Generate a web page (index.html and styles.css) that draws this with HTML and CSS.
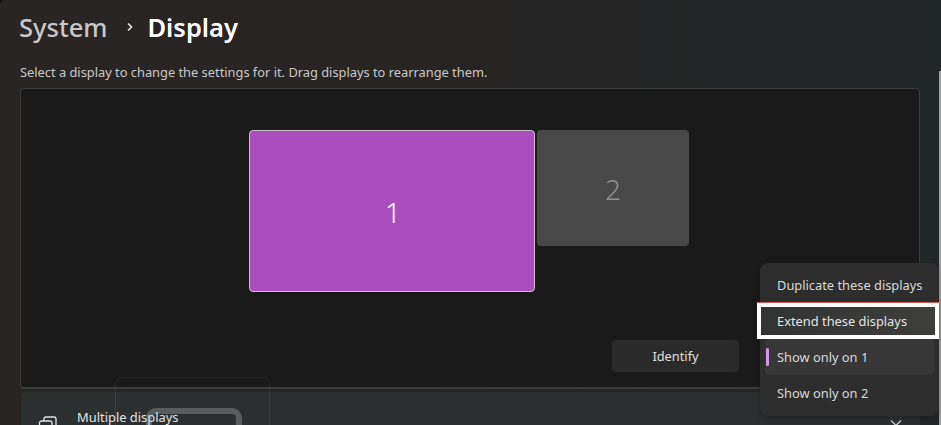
FILE: index.html
```html
<!DOCTYPE html>
<html lang="en">
<head>
<meta charset="utf-8">
<title>System Display</title>
<link rel="stylesheet" href="styles.css">
</head>
<body>
<div class="window">
  <header class="crumbs">
    <span class="crumb-parent">System</span>
    <svg class="crumb-sep" width="10" height="12" viewBox="0 0 10 12"><path d="M3 2.500 6.500 6 3 9.500" fill="none" stroke="#e0e0e0" stroke-width="1.700"/></svg>
    <span class="crumb-current">Display</span>
  </header>
  <p class="hint">Select a display to change the settings for it. Drag displays to rearrange them.</p>
  <section class="arranger">
    <div class="monitor monitor-one">1</div>
    <div class="monitor monitor-two">2</div>
    <div class="identify-row"><button class="identify">Identify</button></div>
  </section>
  <section class="row">
    <svg class="row-icon" width="20" height="16" viewBox="0 0 20 16"><path d="M6 4.500V3a2 2 0 0 1 2-2h8a2 2 0 0 1 2 2v6a2 2 0 0 1-2 2h-1M3.500 5h8.500a2 2 0 0 1 2 2v6a2 2 0 0 1-2 2H3.500a2 2 0 0 1-2-2V7a2 2 0 0 1 2-2z" fill="none" stroke="#e4e4e4" stroke-width="1.300"/></svg>
    <span class="row-title">Multiple displays</span>
    <svg class="row-chevron" width="14" height="8" viewBox="0 0 14 8"><path d="M2 1.500 7 6.500 12 1.500" fill="none" stroke="#cfcfcf" stroke-width="1.300"/></svg>
  </section>
  <div class="ghost-outer"></div>
  <div class="ghost-inner"></div>
  <div class="scrollbar"></div>
  <div class="menu">
    <div class="menu-item">Duplicate these displays</div>
    <div class="menu-item menu-highlight">Extend these displays</div>
    <div class="menu-item menu-selected">Show only on 1</div>
    <div class="menu-item">Show only on 2</div>
  </div>
</div>
</body>
</html>
```
FILE: styles.css
```css
* { box-sizing: border-box; }
html, body { margin: 0; padding: 0; background: #111; }
.window {
  position: relative;
  width: 941px;
  height: 425px;
  overflow: hidden;
  padding: 1px 21px 0 20px;
  border-top-left-radius: 5px;
  background: linear-gradient(90deg, #292523 0%, #272423 45%, #232526 75%, #212627 100%);
  font-family: "Noto Sans", "Open Sans", sans-serif;
  color: #e6e6e6;
}
.crumbs {
  display: flex;
  align-items: center;
  height: 51px;
  margin-left: -1px;
  font-size: 25.500px;
  font-weight: 500;
}
.crumb-parent { color: #c8c8c8; }
.crumb-sep { margin: 0 12px 0 18px; }
.crumb-current { color: #fff; font-weight: 600; }
.hint {
  margin: 12px 0 0;
  height: 24px;
  font-size: 12.830px;
  line-height: 17px;
  color: #c9c9c9;
}
.arranger {
  position: relative;
  height: 301px;
  border: 1px solid #3d3d3d;
  border-bottom-width: 2px;
  border-radius: 4px;
  background: #1a1a1a;
}
.monitor {
  position: absolute;
  display: flex;
  align-items: center;
  justify-content: center;
  padding-top: 2px;
  border-radius: 4px;
  font-size: 28px;
  font-weight: 300;
}
.monitor-one {
  left: 228px;
  top: 41px;
  width: 286px;
  height: 162px;
  padding-left: 2px;
  background: #aa4dbd;
  border: 1px solid #cdbcd1;
  color: #fff;
}
.monitor-two {
  left: 516px;
  top: 41px;
  width: 152px;
  height: 116px;
  background: #484848;
  color: #8f8f8f;
}
.identify-row {
  display: flex;
  justify-content: flex-end;
  padding: 251px 180px 0 0;
}
.identify {
  width: 127px;
  height: 32px;
  border: 0;
  border-radius: 4px;
  background: #2a2a2a;
  font: 400 12.800px "Noto Sans", sans-serif;
  color: #e0e0e0;
}
.row {
  position: relative;
  display: flex;
  align-items: flex-start;
  height: 60px;
  margin: 3px 0 0 1px;
  padding: 18px 17px 0 17px;
  border-radius: 4px 4px 0 0;
  background: #2b2f30;
}
.row-icon { margin-top: 6px; flex: none; }
.row-title {
  position: relative;
  z-index: 1;
  margin: -1px 0 0 19px;
  font-size: 12.900px;
  line-height: 17px;
  color: #e4e4e4;
}
.row-chevron { margin: 9px 0 0 auto; flex: none; }
.ghost-outer {
  position: absolute;
  left: 115px;
  top: 377px;
  width: 155px;
  height: 70px;
  border: 1px solid rgba(255, 255, 255, 0.06);
  border-radius: 8px;
}
.ghost-inner {
  position: absolute;
  left: 146px;
  top: 408px;
  width: 96px;
  height: 50px;
  border: 6px solid rgba(255, 255, 255, 0.22);
  border-radius: 10px;
}
.scrollbar {
  position: absolute;
  right: 0;
  top: 71px;
  width: 2px;
  height: 354px;
  background: #a0a0a0;
}
.menu {
  position: absolute;
  left: 760px;
  top: 263px;
  width: 179px;
  height: 153px;
  padding: 4px 5px;
  border-radius: 8px;
  background: #2e2d2d;
  box-shadow: 0 2px 6px rgba(0, 0, 0, 0.25);
  font-size: 12.850px;
  color: #d9d9d9;
}
.menu-item {
  position: relative;
  display: flex;
  align-items: center;
  height: 36px;
  padding-left: 12px;
  border-radius: 4px;
}
.menu-highlight {
  margin: 0 -5px 0 -8px;
  padding-left: 20px;
  background: linear-gradient(90deg, #333 0%, #3d3d3c 100%);
  border: 4px solid #fff;
  border-top-color: #fff;
  box-shadow: 0 -1px 0 #d85a5a, 1px 0 0 #d85a5a;
  padding-left: 16px;
  border-radius: 0;
  color: #e4e4e4;
}
.menu-selected { background: #373737; }
.menu-selected::before {
  content: "";
  position: absolute;
  left: 1px;
  top: 9px;
  width: 3px;
  height: 18px;
  border-radius: 2px;
  background: #d596e3;
}
```
